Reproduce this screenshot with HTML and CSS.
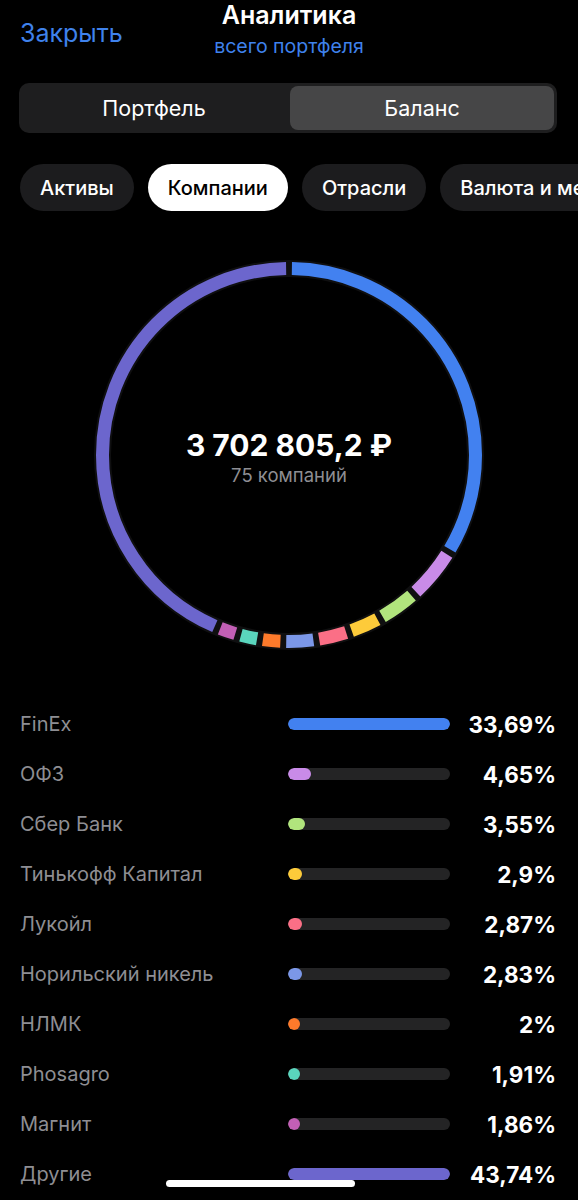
FILE: index.html
```html
<!DOCTYPE html>
<html lang="ru">
<head>
<meta charset="utf-8">
<link rel="stylesheet" href="styles.css">
</head>
<body>
<div class="page">
  <header class="header">
    <div class="close">Закрыть</div>
    <div class="titles">
      <div class="title">Аналитика</div>
      <div class="subtitle">всего портфеля</div>
    </div>
    <div></div>
  </header>

  <div class="segmented">
    <div class="seg">Портфель</div>
    <div class="seg seg-active">Баланс</div>
  </div>

  <div class="chips">
    <div class="chip">Активы</div>
    <div class="chip chip-active">Компании</div>
    <div class="chip">Отрасли</div>
    <div class="chip">Валюта и металлы</div>
  </div>

  <div class="donut">
    <svg width="578" height="400" viewBox="0 0 578 400">
      <circle cx="289" cy="200" r="186.5" fill="none" stroke="#0f0f10" stroke-width="17"/>
      <g transform="rotate(-90 289 200)" fill="none" stroke-width="13">
        <circle cx="289" cy="200" r="186.5" pathLength="100" stroke="#4281f0" stroke-dasharray="33.19 100" stroke-dashoffset="-0.25"/>
        <circle cx="289" cy="200" r="186.5" pathLength="100" stroke="#c98be8" stroke-dasharray="4.15 100" stroke-dashoffset="-33.94"/>
        <circle cx="289" cy="200" r="186.5" pathLength="100" stroke="#b1e57d" stroke-dasharray="3.05 100" stroke-dashoffset="-38.59"/>
        <circle cx="289" cy="200" r="186.5" pathLength="100" stroke="#fdcb3a" stroke-dasharray="2.4 100" stroke-dashoffset="-42.14"/>
        <circle cx="289" cy="200" r="186.5" pathLength="100" stroke="#fb6f86" stroke-dasharray="2.37 100" stroke-dashoffset="-45.04"/>
        <circle cx="289" cy="200" r="186.5" pathLength="100" stroke="#7b97e8" stroke-dasharray="2.33 100" stroke-dashoffset="-47.91"/>
        <circle cx="289" cy="200" r="186.5" pathLength="100" stroke="#fd7a2b" stroke-dasharray="1.5 100" stroke-dashoffset="-50.74"/>
        <circle cx="289" cy="200" r="186.5" pathLength="100" stroke="#5ad5bd" stroke-dasharray="1.41 100" stroke-dashoffset="-52.74"/>
        <circle cx="289" cy="200" r="186.5" pathLength="100" stroke="#c25fb5" stroke-dasharray="1.36 100" stroke-dashoffset="-54.65"/>
        <circle cx="289" cy="200" r="186.5" pathLength="100" stroke="#6c66cd" stroke-dasharray="43.24 100" stroke-dashoffset="-56.51"/>
      </g>
    </svg>
    <div class="donut-center">
      <div class="total">3 702 805,2 ₽</div>
      <div class="count">75 компаний</div>
    </div>
  </div>

  <div class="list">
    <div class="row"><div class="name">FinEx</div><div class="track"><div class="fill c1" style="width:100%"></div></div><div class="pct">33,69%</div></div>
    <div class="row"><div class="name">ОФЗ</div><div class="track"><div class="fill c2" style="width:14%"></div></div><div class="pct">4,65%</div></div>
    <div class="row"><div class="name">Сбер Банк</div><div class="track"><div class="fill c3" style="width:10.5%"></div></div><div class="pct">3,55%</div></div>
    <div class="row"><div class="name">Тинькофф Капитал</div><div class="track"><div class="fill c4" style="width:8.6%"></div></div><div class="pct">2,9%</div></div>
    <div class="row"><div class="name">Лукойл</div><div class="track"><div class="fill c5" style="width:8.5%"></div></div><div class="pct">2,87%</div></div>
    <div class="row"><div class="name">Норильский никель</div><div class="track"><div class="fill c6" style="width:8.4%"></div></div><div class="pct">2,83%</div></div>
    <div class="row"><div class="name">НЛМК</div><div class="track"><div class="fill c7" style="width:5.9%"></div></div><div class="pct">2%</div></div>
    <div class="row"><div class="name">Phosagro</div><div class="track"><div class="fill c8" style="width:5.7%"></div></div><div class="pct">1,91%</div></div>
    <div class="row"><div class="name">Магнит</div><div class="track"><div class="fill c9" style="width:5.5%"></div></div><div class="pct">1,86%</div></div>
    <div class="row"><div class="name">Другие</div><div class="track"><div class="fill c10" style="width:100%"></div></div><div class="pct">43,74%</div></div>
  </div>

  <div class="home-indicator"></div>
</div>
</body>
</html>
```

FILE: styles.css
```css
html, body {
  margin: 0;
  padding: 0;
  background: #000;
}
body {
  font-family: Inter, "Noto Sans", "DejaVu Sans", sans-serif;
  color: #fff;
  width: 578px;
  height: 1200px;
  overflow: hidden;
}
.page {
  position: relative;
  width: 578px;
  height: 1200px;
}
.header {
  display: grid;
  grid-template-columns: 1fr auto 1fr;
  height: 66px;
  align-items: center;
}
.close {
  padding-left: 20px;
  color: #3f82ec;
  font-size: 25px;
  line-height: 30px;
}
.titles {
  align-self: start;
  padding-top: 0;
  text-align: center;
}
.title {
  font-size: 25px;
  font-weight: 600;
  line-height: 30px;
}
.subtitle {
  margin-top: 4px;
  font-size: 19.5px;
  line-height: 24px;
  color: #3f82ec;
}
.segmented {
  margin: 17px 21px 0 19px;
  height: 50px;
  box-sizing: border-box;
  padding: 3px;
  background: #1e1e1f;
  border-radius: 10px;
  display: grid;
  grid-template-columns: 1fr 1fr;
  gap: 4px;
}
.seg {
  display: flex;
  align-items: center;
  justify-content: center;
  font-size: 21.5px;
  font-weight: 400;
  color: #fff;
  border-radius: 8px;
}
.seg-active {
  background: #464647;
}
.chips {
  margin-top: 31px;
  padding-left: 20px;
  display: flex;
  gap: 14px;
  overflow: hidden;
  white-space: nowrap;
}
.chip {
  flex: none;
  height: 47px;
  box-sizing: border-box;
  padding: 0 20px;
  border-radius: 24px;
  background: #1c1c1e;
  display: flex;
  align-items: center;
  font-size: 20px;
  font-weight: 500;
  color: #fff;
}
.chip-active {
  background: #fff;
  color: #000;
}
.donut {
  position: relative;
  margin-top: 44px;
  height: 400px;
}
.donut svg {
  display: block;
}
.donut-center {
  position: absolute;
  left: 0;
  right: 0;
  top: 172px;
  text-align: center;
}
.total {
  font-size: 30px;
  font-weight: 700;
  line-height: 37px;
}
.count {
  font-size: 18.5px;
  line-height: 22px;
  color: #8e8e93;
}
.list {
  margin-top: 44px;
}
.row {
  display: grid;
  grid-template-columns: 268px 162px 1fr;
  height: 50px;
  align-items: center;
  padding: 0 22px 0 20px;
}
.name {
  font-size: 20px;
  color: #8e8e93;
  white-space: nowrap;
}
.track {
  height: 12px;
  border-radius: 6px;
  background: #242425;
  overflow: hidden;
}
.fill {
  height: 12px;
  min-width: 12px;
  border-radius: 6px;
}
.pct {
  text-align: right;
  font-size: 22.5px;
  font-weight: 700;
}
.c1 { background: #4281f0; }
.c2 { background: #c98be8; }
.c3 { background: #b1e57d; }
.c4 { background: #fdcb3a; }
.c5 { background: #fb6f86; }
.c6 { background: #7b97e8; }
.c7 { background: #fd7a2b; }
.c8 { background: #5ad5bd; }
.c9 { background: #c25fb5; }
.c10 { background: #6c66cd; }
.home-indicator {
  position: absolute;
  left: 166px;
  top: 1180px;
  width: 189px;
  height: 7px;
  border-radius: 4px;
  background: #fff;
}
```
